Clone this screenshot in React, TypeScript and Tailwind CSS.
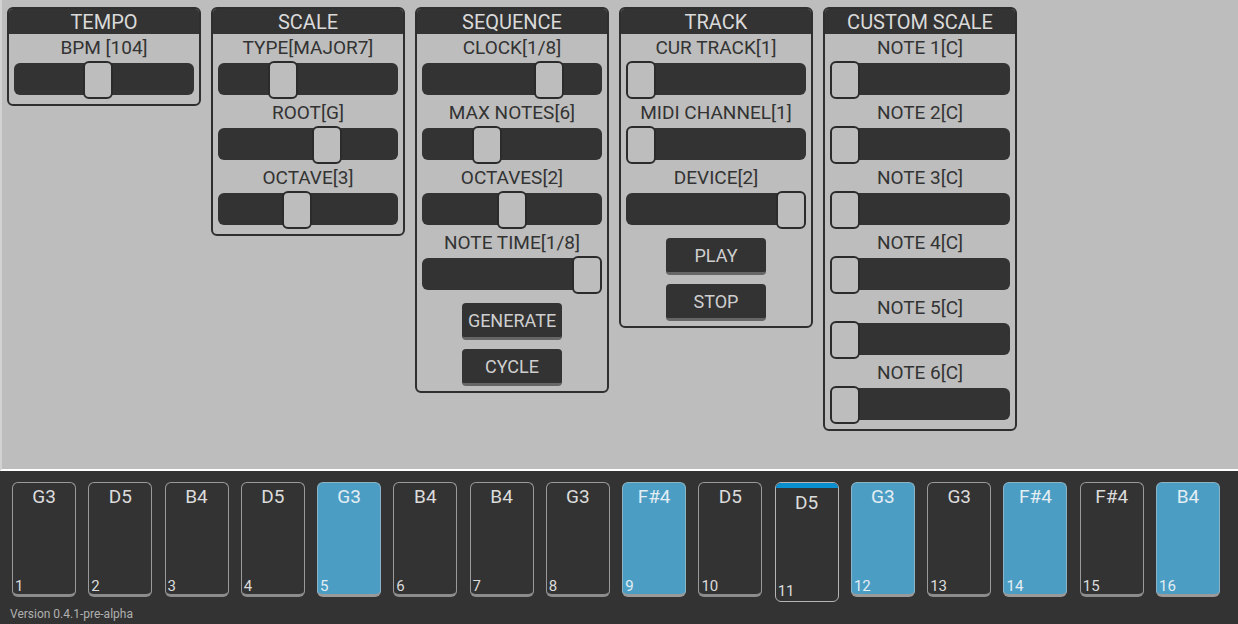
import React from 'react';

type SliderDef = { label: string; pos: number };

const panels: { title: string; sliders: SliderDef[]; buttons?: string[] }[] = [
  { title: 'TEMPO', sliders: [{ label: 'BPM [104]', pos: 69 }] },
  {
    title: 'SCALE',
    sliders: [
      { label: 'TYPE[MAJOR7]', pos: 50 },
      { label: 'ROOT[G]', pos: 94 },
      { label: 'OCTAVE[3]', pos: 64 },
    ],
  },
  {
    title: 'SEQUENCE',
    sliders: [
      { label: 'CLOCK[1/8]', pos: 112 },
      { label: 'MAX NOTES[6]', pos: 50 },
      { label: 'OCTAVES[2]', pos: 75 },
      { label: 'NOTE TIME[1/8]', pos: 150 },
    ],
    buttons: ['GENERATE', 'CYCLE'],
  },
  {
    title: 'TRACK',
    sliders: [
      { label: 'CUR TRACK[1]', pos: 0 },
      { label: 'MIDI CHANNEL[1]', pos: 0 },
      { label: 'DEVICE[2]', pos: 150 },
    ],
    buttons: ['PLAY', 'STOP'],
  },
  {
    title: 'CUSTOM SCALE',
    sliders: [1, 2, 3, 4, 5, 6].map((n) => ({ label: `NOTE ${n}[C]`, pos: 0 })),
  },
];

const pads: { note: string; on?: boolean; current?: boolean }[] = [
  { note: 'G3' },
  { note: 'D5' },
  { note: 'B4' },
  { note: 'D5' },
  { note: 'G3', on: true },
  { note: 'B4' },
  { note: 'B4' },
  { note: 'G3' },
  { note: 'F#4', on: true },
  { note: 'D5' },
  { note: 'D5', current: true },
  { note: 'G3', on: true },
  { note: 'G3' },
  { note: 'F#4', on: true },
  { note: 'F#4' },
  { note: 'B4', on: true },
];

function Slider({ label, pos }: SliderDef) {
  return (
    <div>
      <div className="h-[26px] pt-[1px] text-center text-[19px] leading-[26px] text-[#333]">{label}</div>
      <div className="relative h-[39px]">
        <div className="absolute left-0 right-0 top-[3px] h-[32px] rounded-[6px] bg-[#333]" />
        <div
          className="absolute top-[1px] h-[38px] w-[30px] rounded-[6px] border-2 border-[#2b2b2b] bg-[#bdbdbd]"
          style={{ left: pos }}
        />
      </div>
    </div>
  );
}

function Panel({ title, sliders, buttons }: (typeof panels)[number]) {
  return (
    <div className="w-[194px] overflow-hidden rounded-[6px] border-2 border-[#2f2f2f]">
      <div className="h-[25px] bg-[#333] text-center text-[20px] leading-[27px] text-[#dadada]">{title}</div>
      <div className="px-[5px] pb-[5px]">
        {sliders.map((s) => (
          <Slider key={s.label} {...s} />
        ))}
        {buttons && (
          <div className="flex flex-col items-center gap-[9px] pt-[9px]">
            {buttons.map((b) => (
              <div
                key={b}
                className="h-[37px] w-[100px] rounded-[4px] border-b-[3px] border-[#666] bg-[#333] text-center text-[18px] leading-[35px] text-[#cfcfcf]"
              >
                {b}
              </div>
            ))}
          </div>
        )}
      </div>
    </div>
  );
}

function Pad({ note, on, current, n }: { note: string; on?: boolean; current?: boolean; n: number }) {
  if (current) {
    return (
      <div className="flex h-[120px] w-[64px] flex-col overflow-hidden rounded-[6px] border border-[#b5b5b5] bg-[#333]">
        <div className="h-[5px] bg-[#0a90d0]" />
        <div className="pt-[4px] text-center text-[19px] leading-[22px] text-[#dcdcdc]">{note}</div>
        <div className="mt-auto pb-[2px] pl-[2px] text-[15px] leading-[16px] text-[#dcdcdc]">{n}</div>
      </div>
    );
  }
  return (
    <div
      className={`flex h-[115px] w-[64px] flex-col rounded-[6px] border border-b-[3px] ${
        on ? 'border-[#8db3c6] border-b-[#9a9a9a] bg-[#4b9dc3]' : 'border-[#9a9a9a] border-b-[#8c8c8c] bg-[#333]'
      }`}
    >
      <div className={`pt-[3px] text-center text-[19px] leading-[22px] ${on ? 'text-[#e3eef4]' : 'text-[#dcdcdc]'}`}>
        {note}
      </div>
      <div className={`mt-auto pl-[2px] text-[15px] leading-[16px] ${on ? 'text-[#e3eef4]' : 'text-[#dcdcdc]'}`}>{n}</div>
    </div>
  );
}

export default function App() {
  return (
    <div className="h-[624px] w-[1238px] overflow-hidden font-['Roboto',sans-serif]">
      <div className="flex h-[471px] items-start gap-[10px] border-b-2 border-l-2 border-b-white border-l-[#d2d2d2] bg-[#bdbdbd] pl-[5px] pt-[7px]">
        {panels.map((p) => (
          <Panel key={p.title} {...p} />
        ))}
      </div>
      <div className="h-[153px] bg-[#333]">
        <div className="flex items-start justify-between pl-[12px] pr-[18px] pt-[11px]">
          {pads.map((p, i) => (
            <Pad key={i} n={i + 1} {...p} />
          ))}
        </div>
        <div className="pl-[10px] pt-[5px] text-[12px] leading-[14px] text-[#b0b0b0]">Version 0.4.1-pre-alpha</div>
      </div>
    </div>
  );
}
